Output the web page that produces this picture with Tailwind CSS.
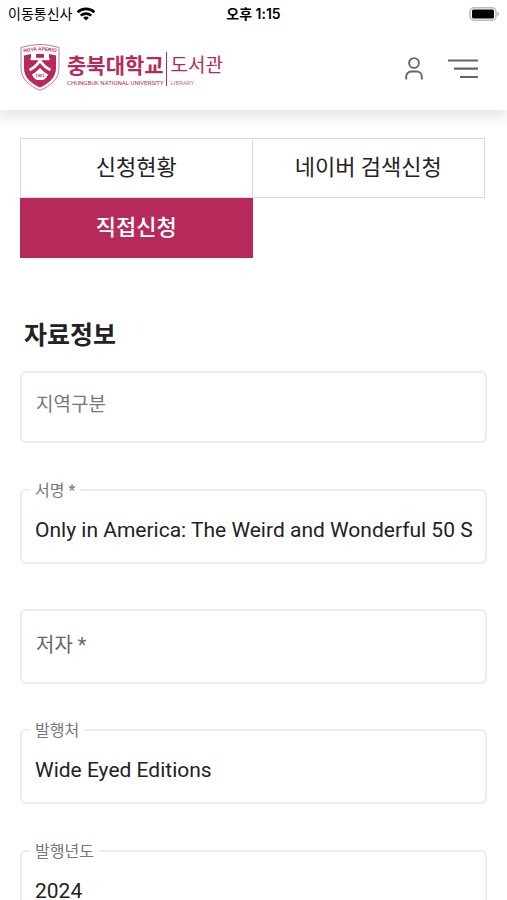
<!DOCTYPE html>
<html lang="ko">
<head>
<meta charset="utf-8">
<meta name="viewport" content="width=device-width, initial-scale=1">
<title>충북대학교 도서관</title>
<script src="https://cdn.jsdelivr.net/npm/@tailwindcss/browser@4"></script>
</head>
<body class="flex h-screen flex-col overflow-hidden bg-white font-[Roboto,'Noto_Sans_CJK_KR',sans-serif] text-[#222]">

<header class="relative z-10 shrink-0 bg-white shadow-[0_8px_12px_rgba(0,0,0,0.1)]">
  <div class="grid h-7 grid-cols-3 items-center pr-2 pl-2 text-black">
    <div class="flex items-center gap-1">
      <span class="text-[14px] leading-5">이동통신사</span>
      <svg class="h-[14px] w-5" viewBox="0 0 20 14" fill="none" stroke="#000" stroke-width="2.6" aria-label="Wi-Fi">
        <path d="M1.6 5.2C6.3.8 13.7.8 18.4 5.2"/>
        <path d="M4.8 8.6c2.9-2.7 7.5-2.7 10.4 0"/>
        <path d="M10 13.6 7.1 10.7c1.6-1.5 4.2-1.5 5.8 0z" fill="#000" stroke="none"/>
      </svg>
    </div>
    <div class="text-center font-[Inter,'Noto_Sans_CJK_KR',sans-serif] text-[14px] leading-5 font-semibold whitespace-nowrap">오후 1:15</div>
    <svg class="h-[14px] w-[30px] justify-self-end" viewBox="0 0 30 14" aria-label="배터리">
      <rect x="1" y=".8" width="26" height="12.4" rx="4" fill="#fff" stroke="#bbb" stroke-width="1.6"/>
      <rect x="3" y="2.5" width="22" height="9" rx="1.500" fill="#000"/>
      <path d="M28.5 5v4q1.4-.6 1.4-2t-1.4-2z" fill="#999"/>
    </svg>
  </div>

  <div class="flex h-[82px] items-center justify-between pr-[29px] pl-5">
    <a href="#" class="flex items-center gap-[7px] text-[#b52a5b]" aria-label="충북대학교 도서관">
      <svg class="mb-1 h-[47px] w-10" viewBox="0 0 40 47">
        <path d="M1 3.500Q20-2.500 39 3.500V24c0 11-8.500 18-19 22.300C9.500 42 1 35 1 24z" fill="#fff" stroke="#cf7493" stroke-width="1"/>
        <path id="motto" d="M3 8.500Q20 4.500 37 8.500" fill="none"/>
        <text font-family="Liberation Sans" font-size="4.800" font-weight="700" fill="#b52a5b" text-anchor="middle"><textPath href="#motto" startOffset="50%">NOVA APERIO</textPath></text>
        <path d="M4 11.500 11 10v4h5v-4h8v4h5v-4l7 1.500V24c0 9.500-7 15.500-16 19.500C11 39.500 4 33.500 4 24z" fill="#b52a5b"/>
        <path d="M10.500 15h19" stroke="#fff" stroke-width="2.400"/>
        <path d="M20 15v3M20 16.500q-3.500 6-10.500 9.500M20 16.500q3.500 6 10.500 9.500" stroke="#fff" stroke-width="2.600" fill="none"/>
        <path d="M20 24q4 4.500 8 6.500-2 4.500-5 5.500h-6q-3-1-5-5.500 4-2 8-6.500z" fill="#fff"/>
        <text x="20" y="33" font-family="Liberation Sans" font-size="4" font-weight="700" fill="#b52a5b" text-anchor="middle">1951</text>
      </svg>
      <span class="flex">
        <span class="flex flex-col border-r border-[#b52a5b] pr-0.5">
          <span class="text-[21px] leading-7 font-bold">충북대학교</span>
          <span class="text-[6px] leading-[6px] whitespace-nowrap">CHUNGBUK NATIONAL UNIVERSITY</span>
        </span>
        <span class="flex flex-col pl-1">
          <span class="text-[19px] leading-7">도서관</span>
          <span class="text-[6px] leading-[6px] opacity-70">LIBRARY</span>
        </span>
      </span>
    </a>
    <nav class="flex items-center gap-6">
      <button type="button" aria-label="내 정보">
        <svg class="h-6 w-[20px]" viewBox="0 0 20 24" fill="none" stroke="#666" stroke-width="1.900">
          <circle cx="10" cy="6" r="4.900"/>
          <path d="M2.200 22.500v-3a5 5 0 0 1 5-5h5.600a5 5 0 0 1 5 5v3"/>
        </svg>
      </button>
      <button type="button" aria-label="메뉴">
        <svg class="h-5 w-[30px]" viewBox="0 0 30 20" stroke="#666" stroke-width="2.200">
          <path d="M0 1.500h30M6 9.700h24M12 18h18"/>
        </svg>
      </button>
    </nav>
  </div>
</header>

<main class="min-h-0 flex-1 overflow-y-auto px-5 pt-7 [scrollbar-width:none]">
  <nav class="mr-0.5 grid grid-cols-2 text-center text-[22px] leading-[58px]">
    <a href="#" class="border border-[#ddd]">신청현황</a>
    <a href="#" class="border border-l-0 border-[#ddd]">네이버 검색신청</a>
    <a href="#" aria-current="page" class="border border-[#b52a5b] bg-[#b52a5b] font-medium text-white">직접신청</a>
  </nav>

  <form>
    <h2 class="mt-[58px] pl-1 text-[25px] leading-10 font-bold">자료정보</h2>

    <div class="relative mt-[15px]">
      <label for="region" class="pointer-events-none absolute top-5 left-4 text-[19px] leading-7 text-[#777]">지역구분</label>
      <select id="region" class="block h-[72px] w-full appearance-none rounded-md border-2 border-[#ececec] bg-transparent px-3.5 text-[21px]"><option></option></select>
    </div>

    <div class="relative mt-[46px]">
      <label for="title" class="absolute -top-2.5 left-2.5 bg-white px-[5px] text-[16px] leading-6 text-[#777]">서명 *</label>
      <input id="title" required value="Only in America: The Weird and Wonderful 50 S" class="block h-[75px] w-full rounded-md border-2 border-[#ececec] pt-1.5 pr-2 pl-[13px] text-[21px]">
    </div>

    <div class="relative mt-[45px]">
      <label for="author" class="pointer-events-none absolute top-5 left-4 text-[20px] leading-8 text-[#666]">저자 *</label>
      <input id="author" required class="block h-[75px] w-full rounded-md border-2 border-[#ececec] pt-1.5 pr-2 pl-[13px] text-[21px]">
    </div>

    <div class="relative mt-[45px]">
      <label for="publisher" class="absolute -top-2.5 left-2.5 bg-white px-[5px] text-[16px] leading-6 text-[#777]">발행처</label>
      <input id="publisher" value="Wide Eyed Editions" class="block h-[75px] w-full rounded-md border-2 border-[#ececec] pt-1.5 pr-2 pl-[13px] text-[21px]">
    </div>

    <div class="relative mt-[46px]">
      <label for="year" class="absolute -top-2.5 left-2.5 bg-white px-[5px] text-[16px] leading-6 text-[#777]">발행년도</label>
      <input id="year" value="2024" inputmode="numeric" class="block h-[75px] w-full rounded-md border-2 border-[#ececec] pt-1.5 pr-2 pl-[13px] text-[21px]">
    </div>
  </form>
</main>
</body>
</html>
